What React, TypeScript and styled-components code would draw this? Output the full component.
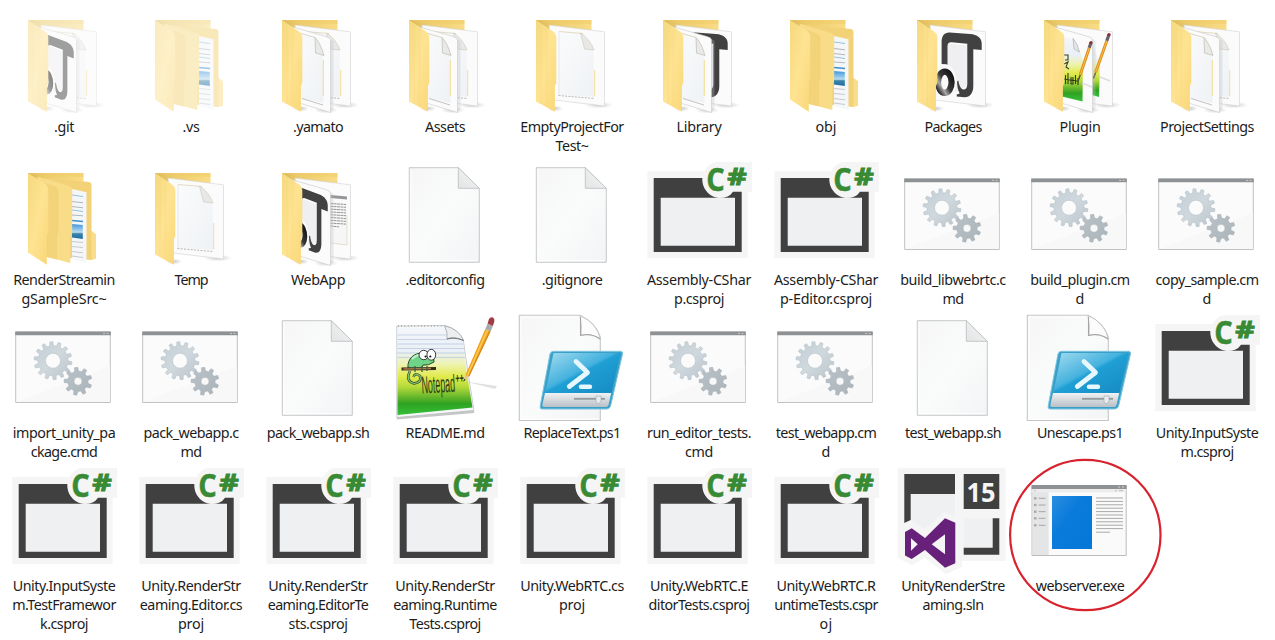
import React, { useLayoutEffect, useRef, useState } from 'react';
import styled, { createGlobalStyle } from 'styled-components';

const GlobalStyle = createGlobalStyle`
  body { margin: 0; background: #fff; overflow: hidden; }
`;

const Explorer = styled.main`
  width: 1275px;
  height: 640px;
  overflow: hidden;
  background: #fff;
`;

const FileGrid = styled.div`
  display: grid;
  grid-template-columns: repeat(10, 127px);
  grid-auto-rows: 153px;
`;

const FileTile = styled.div`
  position: relative;
  display: flex;
  flex-direction: column;
  align-items: center;
  height: 153px;
`;

const IconArt = styled.svg<{ $faded?: boolean }>`
  display: block;
  flex: none;
  width: 127px;
  height: 117px;
  overflow: visible;
  opacity: ${(p) => (p.$faded ? 0.5 : 1)};
`;

const FileName = styled.div`
  display: flex;
  flex-direction: column;
  align-items: center;
  padding-left: 1px;
  font-family: 'Noto Sans', 'Open Sans', sans-serif;
  font-size: 14.3px;
  line-height: 19px;
  color: #1c1c1c;
`;

const NameLine = styled.span`
  white-space: nowrap;
`;

const Highlight = styled.svg`
  position: absolute;
  left: -7px;
  top: -1px;
  width: 154px;
  height: 154px;
  z-index: 1;
`;

function gear(cx: number, cy: number, outer: number, root: number, teeth: number, hole: number) {
  const step = (Math.PI * 2) / teeth;
  const at = (r: number, a: number) => `${(cx + r * Math.cos(a)).toFixed(2)} ${(cy + r * Math.sin(a)).toFixed(2)}`;
  let d = '';
  for (let i = 0; i < teeth; i++) {
    const a = i * step - Math.PI / 2 - step * 0.2;
    d += `${i ? 'L' : 'M'}${at(root, a - step * 0.28)}L${at(outer, a - step * 0.17)}L${at(outer, a + step * 0.17)}L${at(root, a + step * 0.28)}`;
  }
  return `${d}Z M${cx - hole} ${cy}a${hole} ${hole} 0 1 0 ${hole * 2} 0a${hole} ${hole} 0 1 0 ${-hole * 2} 0Z`;
}

const Gradients = () => (
  <svg width="0" height="0" style={{ display: 'block' }}>
    <defs>
      <linearGradient id="flap" x1="0" y1="0" x2="1" y2="1">
        <stop offset="0" stopColor="#f5d97e" /><stop offset=".5" stopColor="#fee392" /><stop offset="1" stopColor="#f9d777" />
      </linearGradient>
      <linearGradient id="back" x1="0" y1="0" x2="1" y2="0">
        <stop offset="0" stopColor="#dcb85a" /><stop offset=".3" stopColor="#eccb6c" /><stop offset="1" stopColor="#f9dc86" />
      </linearGradient>
      <linearGradient id="sheet" x1="0" y1="0" x2="1" y2="1">
        <stop offset="0" stopColor="#f6f6f6" /><stop offset=".5" stopColor="#fafbfb" /><stop offset="1" stopColor="#f3f4f5" />
      </linearGradient>
      <linearGradient id="inset" x1="0" y1="0" x2="1" y2="1">
        <stop offset="0" stopColor="#fafbfc" /><stop offset="1" stopColor="#eff2f5" />
      </linearGradient>
      <linearGradient id="fold" x1="0" y1="1" x2="1" y2="0">
        <stop offset="0" stopColor="#e2e4e5" /><stop offset="1" stopColor="#f6f6f6" />
      </linearGradient>
      <linearGradient id="ring" x1="1" y1="0" x2="0" y2="1">
        <stop offset="0" stopColor="#111" /><stop offset=".5" stopColor="#3a3a3a" /><stop offset=".72" stopColor="#aaa" /><stop offset="1" stopColor="#111" />
      </linearGradient>
      <linearGradient id="grass" x1="0" y1="0" x2="0" y2="1">
        <stop offset="0" stopColor="#f4f6fb" /><stop offset=".28" stopColor="#eaf0f6" /><stop offset=".42" stopColor="#eef3b0" /><stop offset=".56" stopColor="#e2ea4c" /><stop offset=".68" stopColor="#b5da3a" /><stop offset=".8" stopColor="#62b52b" /><stop offset=".87" stopColor="#2fa222" /><stop offset="1" stopColor="#35c038" />
      </linearGradient>
      <linearGradient id="shell" x1="0" y1="0" x2="1" y2="1">
        <stop offset="0" stopColor="#a4dcf0" /><stop offset=".45" stopColor="#45b2de" /><stop offset=".5" stopColor="#1f9fd4" /><stop offset="1" stopColor="#1689c2" />
      </linearGradient>
      <linearGradient id="tray" x1="0" y1="0" x2="0" y2="1">
        <stop offset="0" stopColor="#f0f2f3" /><stop offset="1" stopColor="#b9c1c6" />
      </linearGradient>
      <linearGradient id="cog" x1="0" y1="0" x2="1" y2="1">
        <stop offset="0" stopColor="#c2cfd6" /><stop offset=".5" stopColor="#cfd8dd" /><stop offset="1" stopColor="#bac4cb" />
      </linearGradient>
      <linearGradient id="cogSmall" x1="0" y1="0" x2="1" y2="1">
        <stop offset="0" stopColor="#b9c2c8" /><stop offset="1" stopColor="#abb4b9" />
      </linearGradient>
      <linearGradient id="screen" x1="0" y1="0" x2="1" y2="1">
        <stop offset="0" stopColor="#2b8ee0" /><stop offset=".4" stopColor="#0a7bdb" /><stop offset="1" stopColor="#0477d8" />
      </linearGradient>
      <linearGradient id="thumb" x1="0" y1="0" x2="0" y2="1">
        <stop offset="0" stopColor="#3f97dc" /><stop offset=".55" stopColor="#b9dcf0" /><stop offset=".65" stopColor="#3e83a5" /><stop offset="1" stopColor="#1b6daa" />
      </linearGradient>
      <radialGradient id="shade">
        <stop offset="0" stopColor="#8a8a8a" stopOpacity=".45" /><stop offset="1" stopColor="#999" stopOpacity="0" />
      </radialGradient>
    </defs>
  </svg>
);

type Content = 'page' | 'logo' | 'notes' | 'text';

const Monogram = () => (
  <g>
    <path d="M58 43.500 78.500 45.500V86L66 92 58 68z" fill="#efeff2" />
    <path d="M52.6 64V42c0-6 2.600-9.800 8-9.600L81 34c7.500.6 11.700 4 11.700 9.500V50l-8.400-.8V86c0 7-3.300 11.300-8.800 11.200l-7.800-.8v-2l3-.8c-1.700-3-2.600-7-2.600-12l1.200-1c1 5.500 2.700 9 5.200 9 2.300 0 3.800-1.800 3.800-5.600V43.800l-15.600-1.500c-3-.2-4.200 1-4.200 4V65z" fill="#414141" />
    <ellipse cx="55.800" cy="82.300" rx="11.600" ry="18" fill="#fafafa" />
    <ellipse cx="55.800" cy="82.300" rx="6.800" ry="10.600" fill="none" stroke="url(#ring)" strokeWidth="6.200" />
  </g>
);

const SmallPencil = ({ x1, y1, x2, y2 }: { x1: number; y1: number; x2: number; y2: number }) => {
  const mx = x1 + (x2 - x1) * 0.14, my = y1 + (y2 - y1) * 0.14;
  const tx = x1 + (x2 - x1) * 0.86, ty = y1 + (y2 - y1) * 0.86;
  return (
    <g fill="none">
      <path d={`M${tx} ${ty}L${x2} ${y2}`} stroke="#5b4836" strokeWidth="1.400" />
      <path d={`M${mx} ${my}L${tx} ${ty}`} stroke="#df8e1c" strokeWidth="3" />
      <path d={`M${mx} ${my}L${tx} ${ty}`} stroke="#f9bf4a" strokeWidth="1" />
      <path d={`M${x1} ${y1}L${mx} ${my}`} stroke="#6c5d66" strokeWidth="3.200" />
      <circle cx={x1} cy={y1} r="1.600" fill="#8d2c36" />
    </g>
  );
};

const BackSheet = ({ kind, full }: { kind: Content; full: boolean }) => (
  <g>
    <ellipse cx="91" cy="105" rx="14" ry="3.500" fill="url(#shade)" />
    <path d="M41 25 96.500 31.800V106L46 100z" fill="#fbfbfb" stroke="#d2d2d2" strokeWidth=".6" />
    {kind === 'page' && (
      <>
        <path d="M50.800 31.500 75 33.500 85.500 50 86.600 97 50.500 95z" fill="url(#inset)" />
        <path d="M51 31.500 75 33.500" stroke="#d8cfaa" strokeWidth=".7" />
        <path d="M86.700 70V96" stroke="#f0d77f" strokeWidth=".8" />
        <path d="M50.500 95.500 86 98.500" stroke="#888" strokeWidth=".6" strokeDasharray="2 1.300" />
        <path d="M72.500 33 76.500 49 86 50C83 42 78.500 37 72.500 33z" fill="#e8e8e6" stroke="#c6c1ad" strokeWidth=".5" />
        {full && <path d="M51 32V95" stroke="#dde1e5" strokeWidth=".7" />}
      </>
    )}
    {kind === 'logo' && <Monogram />}
    {kind === 'notes' && (
      <>
        <path d="M76 44C80 48 80 56 84 65L83 97 76 95z" fill="url(#grass)" />
        <path d="M84 77 94 81" stroke="#ddd" strokeWidth="1.500" />
        <SmallPencil x1={93} y1={34.500} x2={77.500} y2={78.500} />
      </>
    )}
    {kind === 'text' && (
      <>
        <path d="M60 40.500 93 43.500V46.500L60 43.500z" fill="#949699" />
        <path d="M60 47 93 50V92L60 89z" fill="#f6f6f6" />
        {[0, 1, 2, 3, 4, 5, 6, 7, 8].map((n) => (
          <path key={n} d={`M76 ${50.500 + n * 2.800}L${n === 8 ? 85 : 92} ${51.500 + n * 2.800}`} stroke="#8c8c8c" strokeWidth=".9" strokeDasharray="3 .5" />
        ))}
        <path d="M77 90 93 92V62" fill="none" stroke="#d9d0ad" strokeWidth=".6" />
      </>
    )}
  </g>
);

const FrontSheet = ({ kind }: { kind: Content }) => (
  <g>
    <ellipse cx="72" cy="110" rx="12" ry="3.500" fill="url(#shade)" />
    <path d="M76.500 39 79.500 41V108L76.500 112z" fill="#b9bdc2" opacity=".3" />
    <path d="M33.500 25.500 71 36.200Q76.500 37.400 76.500 40V112.500L45 103z" fill="#fbfbfb" stroke="#c8c8c8" strokeWidth=".6" />
    {kind === 'page' && (
      <>
        <path d="M40 32 61 37.500 69.500 55V103L40 97z" fill="url(#inset)" />
        <path d="M40 31.500 61 37.500" stroke="#cdc6ad" strokeWidth=".7" />
        <path d="M69.300 60V96" stroke="#f1d984" strokeWidth=".9" />
        <path d="M48 98.500 69 105" stroke="#888" strokeWidth=".5" />
        <path d="M61 37.500 61.500 53 70 55.500C67.500 47 65 42 61 37.500z" fill="#e9e9e7" stroke="#b5b3a6" strokeWidth=".6" />
      </>
    )}
    {kind === 'logo' && <g transform="matrix(.76 .2 0 .94 3.300 -7)"><Monogram /></g>}
    {kind === 'notes' && (
      <>
        <path d="M46 37 57 39Q64 50 67 60L66.500 101.500 46 96.500z" fill="url(#grass)" />
        <path d="M57 38.500 58 49 63.500 52Q62 44 57 38.500z" fill="#e3e5ea" stroke="#a7a7a4" strokeWidth=".6" />
        <path d="M48 55h4v5h-3M48 64l4-2-2 5 3 2M49.500 75v9M52 73v11M55 77v7h2v-7M59.500 75v9M62 78v7M48 79l15 2" fill="none" stroke="#30401c" strokeWidth="1.100" />
        <path d="M66 83 76 87" stroke="#ddd" strokeWidth="1.500" />
        <SmallPencil x1={75} y1={42.500} x2={62.500} y2={80} />
      </>
    )}
  </g>
);

const FolderBack = () => (
  <>
    <path d="M28 20H83.500V80L46 100 28 90z" fill="url(#back)" />
    <path d="M28 20H83.500V24L42 23z" fill="#f0cb66" opacity=".5" />
  </>
);

const FolderFlap = () => (
  <>
    <ellipse cx="47" cy="108.500" rx="8" ry="3" fill="url(#shade)" />
    <path d="M28 20 45.700 32Q48.300 34 48.300 37V83L46.900 86V111.700L28 101.500z" fill="url(#flap)" />
    <path d="M33 24V104M38.500 27V107" stroke="#f2cf6b" strokeWidth=".5" opacity=".5" />
  </>
);

const Folder = ({ front, rear }: { front?: Content; rear: Content }) => (
  <g fill="none">
    <FolderBack />
    <BackSheet kind={rear} full={!front} />
    {front && <FrontSheet kind={front} />}
    <FolderFlap />
  </g>
);

const NestedFolder = () => (
  <g fill="none">
    <FolderBack />
    <path d="M45 25 89 29Q91.500 29.500 91.500 32V78L96 81.500V105.500L91 107 70 105z" fill="#f3d277" />
    <path d="M91.500 78 96 81.500V105.500L91.500 106.500z" fill="#fadd8b" />
    <path d="M88 110 72 106V36L86.500 39.300V109.500z" fill="#f4f6f8" />
    <g stroke="#7fb2d9" strokeWidth=".8">
      <path d="M72 42 83 43.500M72 57 83 58.500" />
      <path d="M72 48.500 83 49.800M72 53.500 83 54.800M72 62 83 62.800" stroke="#9aa7b3" />
      <path d="M72 67.500 83 68.500" stroke="#3c8fd0" strokeWidth="1.400" />
      <path d="M72 88.500 83 89.500M72 93.500 83 94.500M72 98.500 83 99.800M72 103 83 104.500" stroke="#b9bfc6" />
    </g>
    <path d="M72 71 82.800 72V86L72 84.500z" fill="url(#thumb)" />
    <path d="M37.500 23.500 70 33.300Q72.200 34.200 72.200 37V80L70.300 85V110L44 103z" fill="#f9dc88" />
    <path d="M45 30 56 34Q58.500 36 58.500 40V78L57 83V106.500L46 104z" fill="#efcf73" opacity=".7" />
    <path d="M51 34V104M54.500 36V105" stroke="#f5d678" strokeWidth=".6" />
    <path d="M28 20 44.500 30.500Q48.300 33 48.300 37V79L46.800 82V111.700L28 99.500z" fill="url(#flap)" />
  </g>
);

const DocumentIcon = () => (
  <g stroke="#c0c2c3" strokeWidth=".9">
    <path d="M28.300 14.700H77.300L98.300 35.300V109.300H28.300z" fill="url(#sheet)" />
    <path d="M30 16.500V107.500H96.500" fill="none" stroke="#fff" />
    <path d="M77.300 14.700V35.300H98.300z" fill="url(#fold)" />
  </g>
);

const ProjectIcon = () => (
  <g>
    <path d="M12.300 18H112.700V105.300H12.300z" fill="#f5f5f5" />
    <path d="M18.700 25H106.700V99H18.700z" fill="#404040" />
    <path d="M25.700 44.700H100V92.700H25.700z" fill="#eff0f1" />
    <path d="M80 9H117V38.700H98Q94 45 84.300 45A18.500 18.500 0 0 1 80 9z" fill="#f5f5f5" />
    <g fill="#388a34" stroke="#388a34" fontFamily="'Open Sans','Noto Sans',sans-serif" fontWeight="700">
      <text x="71.300" y="38" strokeWidth=".5" fontSize="32" textLength="18.500" lengthAdjust="spacingAndGlyphs">C</text>
      <text x="92.300" y="31.800" strokeWidth=".9" fontSize="22.500" textLength="19.500" lengthAdjust="spacingAndGlyphs">#</text>
    </g>
  </g>
);

const BatchIcon = () => (
  <g>
    <path d="M15.700 26H110.300V96.500H15.700z" fill="#fbfbfb" stroke="#c2c2c2" strokeWidth="1" />
    <path d="M16 96 110 60V96z" fill="#f8f8f8" />
    <path d="M15.200 25.500H110.800V29.300H15.200z" fill="#8f9294" />
    <path d="M103 27.400H105M106.500 27.400H108.500" stroke="#c9c9c9" />
    <path d={gear(53, 54.700, 19, 15, 14, 7.500)} fill="url(#cog)" stroke="#b5c1c8" strokeWidth=".6" fillRule="evenodd" strokeLinejoin="round" />
    <path d={gear(78, 75.300, 14, 10.200, 9, 4)} fill="url(#cogSmall)" stroke="#a0abb0" strokeWidth=".5" fillRule="evenodd" strokeLinejoin="round" />
  </g>
);

const NotepadIcon = () => (
  <g fill="none">
    <path d="M15.700 113.500 93.500 107 92 103 16 110z" fill="#8e8e8e" opacity=".5" />
    <path d="M15.800 20 64 19.500Q77 23 82.300 33.700L86.300 62 93 104.500 15.800 111.500z" fill="#f6f7f8" stroke="#b5b9bb" strokeWidth=".7" />
    <path d="M16.500 22 64 21.500 81.500 35 85 62 91.500 101.500 16.500 109z" fill="url(#grass)" />
    <g stroke="#b3c4dc" strokeWidth=".7">
      <path d="M16.500 29H65M16.500 33.500H67M16.500 38H82M16.500 42.500H83M16.500 47H84M16.500 51.500H84" />
    </g>
    <path d="M17 20H63" stroke="#999" strokeWidth="2" strokeDasharray=".6 2.700" />
    <path d="M63.500 19.800Q67 26 66 33 74 30 82.600 34.500 78 23 63.500 19.800z" fill="#eceeef" stroke="#9fa4a6" strokeWidth=".8" />
    <path d="M66 33Q74 30.500 82.600 34.500" stroke="#777c80" strokeWidth="1.200" />
    <path d="M27 62C26 53 33 46 44 47Q54 49 53 56 47 60 42 59L40 63z" fill="#6fd488" stroke="#2b4a2a" strokeWidth="1" />
    <path d="M31 53Q36 48 42 49" stroke="#c0f1c9" strokeWidth="2" />
    <path d="M20.500 63 55 62.500" stroke="#3b2a1c" strokeWidth="3.200" />
    <path d="M22.500 63 50 62.500" stroke="#a77b4d" strokeWidth="1.500" />
    <path d="M29 65Q24 75 33 77.500 41 76.500 39 70 34 66 32.500 71" stroke="#38482f" strokeWidth="2.600" />
    <path d="M29 65Q24 75 33 77.500 41 76.500 39 70 34 66 32.500 71" stroke="#82cd75" strokeWidth="1.200" />
    <path d="M34 60v6M41 60v6M46 60v5" stroke="#37633a" strokeWidth="1.300" />
    <circle cx="42.700" cy="49" r="4.700" fill="#fff" stroke="#222" strokeWidth=".9" />
    <ellipse cx="50.300" cy="48.800" rx="4.400" ry="5.400" fill="#fff" stroke="#222" strokeWidth=".9" />
    <circle cx="44.600" cy="50.500" r="1.100" fill="#111" /><circle cx="49.300" cy="50.500" r="1.100" fill="#111" />
    <g transform="rotate(-3 41 88)" fill="#2a3a14" fontFamily="'Liberation Sans',sans-serif">
      <text x="41" y="87.500" fontSize="24.500" textLength="33.500" lengthAdjust="spacingAndGlyphs">Notepad</text>
      <text x="75" y="78.500" fontSize="13" fontWeight="700" textLength="8.500" lengthAdjust="spacingAndGlyphs">++</text>
    </g>
    <path d="M84 75.500 116 80 114 83z" fill="#aaa" opacity=".35" />
    <path d="M82.300 75.800 84.500 68 88.300 69.800z" fill="#e6c39a" />
    <path d="M82.300 75.800 83.100 73 84.600 73.700z" fill="#222" />
    <path d="M84.500 69 104.300 23 109.600 25.500 88.300 70.500z" fill="#f0a01d" />
    <path d="M85.700 69.500 105.600 23.700 107.200 24.500 87 70z" fill="#fccb55" />
    <path d="M87.700 70.200 109 25.300" stroke="#c98018" strokeWidth=".9" />
    <path d="M104.300 23 106.600 17.500 111.900 20 109.600 25.500z" fill="#a7abb0" />
    <path d="M106.600 17.500 108 13Q109.500 10.500 112 11.500 114 12.800 113.300 15.500L111.900 20z" fill="#a23a43" />
  </g>
);

const ShellScriptIcon = () => (
  <g fill="none">
    <path d="M11.300 9.300H72Q88 17 92.300 31V114.500H11.300z" fill="url(#sheet)" stroke="#c6c6c6" strokeWidth="1.100" />
    <path d="M13 11H70M13 11V113H91" stroke="#fff" strokeWidth="1" />
    <path d="M72 9.500Q74 20 73 29.500 83 27 92.300 33 89 17 72 9.500z" fill="#fcfcfc" stroke="#bdbdbd" strokeWidth=".8" />
    <path d="M72.500 11V29.500Q83 26.500 92 33" stroke="#a6a6a6" strokeWidth="1.100" />
    <path d="M45 45.300H112.500Q115 45.500 114.500 48L102.600 100Q101.500 103 99 103H34Q31.500 103 32.200 100L42 48Q43 45.300 45 45.300z" fill="#3aa0c8" stroke="#7dc6e2" strokeWidth="1" />
    <path d="M45.500 47H112.500L103.300 87H37.300z" fill="url(#shell)" />
    <path d="M37 87H103.200L100.500 99Q100 101 98 101H36Q34 101 34.300 99z" fill="url(#tray)" />
    <path d="M66 92.800H97" stroke="#919a9f" strokeWidth="1.800" />
    <path d="M88 90H93V95.500L90 98 88 96z" fill="#e9ecee" stroke="#a0a7ab" strokeWidth=".6" />
    <path d="M68 55.500 79.500 66.500 61.300 80.500" stroke="#e6f7fd" strokeWidth="4.800" strokeLinecap="round" strokeLinejoin="round" />
    <path d="M73 80.800H82" stroke="#e6f7fd" strokeWidth="4.400" strokeLinecap="round" />
  </g>
);

const SolutionIcon = () => (
  <g>
    <path d="M8.700 8.700H116.700V102H73V108L57 115 36 99 23 106 8.700 99z" fill="#f5f5f5" />
    <path d="M21.700 35H66V58L55 53 36 70 24 62H21.700zM74.700 59.300H103.700V88.700H74.700z" fill="#eff0f1" />
    <path d="M15.300 15H66V35H21.700V61L15.300 64zM74.700 15H110.300V50H74.700zM103.700 59.300H110.300V95.700H74.700V88.700H103.700z" fill="#404040" />
    <text x="77.500" y="42.500" fill="#f5f5f5" fontFamily="'Noto Sans','Open Sans',sans-serif" fontWeight="700" fontSize="27.500" textLength="29" lengthAdjust="spacingAndGlyphs">15</text>
    <path d="M56 59.300 66.300 63.700V104.300L56 108.700 36 91 22.700 100 16 96.500V73L22.700 69.300 36 79zM22 79.300V91.700L28.700 85.300zM56 75.300 42.700 85.300 56 95.300z" fill="#68217a" fillRule="evenodd" />
  </g>
);

const ProgramIcon = () => (
  <g fill="none">
    <path d="M16 26.500H110.200V96.500H16z" fill="#fafafa" stroke="#b4b4b4" strokeWidth=".9" />
    <path d="M16.400 31H32.700V96H16.400z" fill="#e4e5e6" />
    <path d="M15.600 26H110.600V30H15.600z" fill="#8f9294" />
    <path d="M16.400 30H109.800V33.300H16.400z" fill="#ededed" />
    <path d="M102 28H104M106 28H108" stroke="#cfcfcf" />
    <path d="M99 31.700H101M103 31.700H107M18 31.700H20" stroke="#bbb" />
    <path d="M36 37H76V90H36z" fill="url(#screen)" />
    {[39.300, 46, 52.700, 59.300, 66.300].map((y) => (
      <g key={y}>
        <path d={`M18 ${y - 1.200}H20.500V${y + 1.200}H18z`} fill="#aaa" />
        <path d={`M22.700 ${y}H29.500`} stroke="#a5a5a5" />
      </g>
    ))}
    {[39, 42.400, 45.800, 49.200, 52.600, 56, 59.400, 62.800, 66.200, 69.600].map((y) => (
      <path key={y} d={`M80 ${y}H107`} stroke="#a9a9a9" strokeWidth="1" />
    ))}
    <path d="M80 73.200H94" stroke="#a9a9a9" />
  </g>
);

const art: Record<string, React.ReactNode> = {
  pages: <Folder front="page" rear="page" />,
  page: <Folder rear="page" />,
  logoPages: <Folder front="logo" rear="page" />,
  pageLogo: <Folder front="page" rear="logo" />,
  logo: <Folder rear="logo" />,
  notes: <Folder front="notes" rear="notes" />,
  logoText: <Folder front="logo" rear="text" />,
  nested: <NestedFolder />,
  doc: <DocumentIcon />,
  proj: <ProjectIcon />,
  cmd: <BatchIcon />,
  md: <NotepadIcon />,
  ps: <ShellScriptIcon />,
  sln: <SolutionIcon />,
  exe: <ProgramIcon />,
};

/* A name line that tightens or opens its tracking until it has the given width. */
const FittedLine = ({ text, width }: { text: string; width: number }) => {
  const ref = useRef<HTMLSpanElement>(null);
  const [spacing, setSpacing] = useState(0);
  useLayoutEffect(() => {
    if (!ref.current) return;
    setSpacing((width - ref.current.getBoundingClientRect().width) / text.length);
  }, [text, width]);
  return <NameLine ref={ref} style={{ letterSpacing: spacing }}>{text}</NameLine>;
};

type Entry = [icon: string, lines: [string, number][], flag?: 'faded' | 'marked'];

const files: Entry[] = [
  ['logoPages', [['.git', 20]], 'faded'],
  ['nested', [['.vs', 17]], 'faded'],
  ['pages', [['.yamato', 50]]],
  ['pages', [['Assets', 40]]],
  ['page', [['EmptyProjectFor', 103.5], ['Test~', 33]]],
  ['pageLogo', [['Library', 45]]],
  ['nested', [['obj', 21]]],
  ['logo', [['Packages', 57]]],
  ['notes', [['Plugin', 41]]],
  ['pages', [['ProjectSettings', 94]]],
  ['nested', [['RenderStreamin', 101.5], ['gSampleSrc~', 85]]],
  ['page', [['Temp', 33]]],
  ['logoText', [['WebApp', 54]]],
  ['doc', [['.editorconfig', 79]]],
  ['doc', [['.gitignore', 60.5]]],
  ['proj', [['Assembly-CShar', 104], ['p.csproj', 50]]],
  ['proj', [['Assembly-CShar', 104], ['p-Editor.csproj', 92]]],
  ['cmd', [['build_libwebrtc.c', 105.5], ['md', 21]]],
  ['cmd', [['build_plugin.cm', 99.5], ['d', 9]]],
  ['cmd', [['copy_sample.cm', 103], ['d', 9]]],
  ['cmd', [['import_unity_pa', 102.5], ['ckage.cmd', 66.5]]],
  ['cmd', [['pack_webapp.c', 95], ['md', 21]]],
  ['doc', [['pack_webapp.sh', 102.5]]],
  ['md', [['README.md', 79]]],
  ['ps', [['ReplaceText.ps1', 97]]],
  ['cmd', [['run_editor_tests.', 104], ['cmd', 28]]],
  ['cmd', [['test_webapp.cm', 100.5], ['d', 9]]],
  ['doc', [['test_webapp.sh', 96]]],
  ['ps', [['Unescape.ps1', 86]]],
  ['proj', [['Unity.InputSyste', 102.5], ['m.csproj', 53]]],
  ['proj', [['Unity.InputSyste', 102.5], ['m.TestFramewor', 103.5], ['k.csproj', 48]]],
  ['proj', [['Unity.RenderStr', 99.5], ['eaming.Editor.cs', 102.5], ['proj', 26]]],
  ['proj', [['Unity.RenderStr', 99.5], ['eaming.EditorTe', 100.5], ['sts.csproj', 59]]],
  ['proj', [['Unity.RenderStr', 99.5], ['eaming.Runtime', 103.5], ['Tests.csproj', 71.5]]],
  ['proj', [['Unity.WebRTC.cs', 103.5], ['proj', 26]]],
  ['proj', [['Unity.WebRTC.E', 98], ['ditorTests.csproj', 101]]],
  ['proj', [['Unity.WebRTC.R', 99], ['untimeTests.cspr', 103.5], ['oj', 13]]],
  ['sln', [['UnityRenderStre', 103.5], ['aming.sln', 61]]],
  ['exe', [['webserver.exe', 88.5]], 'marked'],
];

export default function App() {
  return (
    <Explorer>
      <GlobalStyle />
      <Gradients />
      <FileGrid>
        {files.map(([icon, lines, flag], i) => (
          <FileTile key={i}>
            <IconArt viewBox="0 0 127 117" $faded={flag === 'faded'}>{art[icon]}</IconArt>
            <FileName>
              {lines.map(([text, width], n) => <FittedLine key={n} text={text} width={width} />)}
            </FileName>
            {flag === 'marked' && (
              <Highlight viewBox="0 0 154 154">
                <circle cx="76.300" cy="77" r="75.200" fill="none" stroke="#d8232f" strokeWidth="2.200" />
              </Highlight>
            )}
          </FileTile>
        ))}
      </FileGrid>
    </Explorer>
  );
}
